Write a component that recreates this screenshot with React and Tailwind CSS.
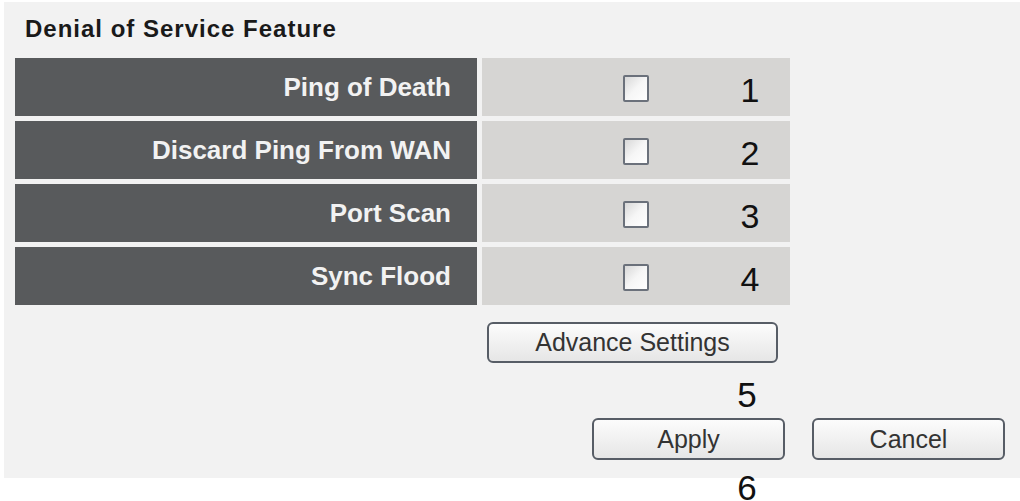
import React from 'react';

const features = [
  { label: 'Ping of Death', num: '1' },
  { label: 'Discard Ping From WAN', num: '2' },
  { label: 'Port Scan', num: '3' },
  { label: 'Sync Flood', num: '4' },
];

const Checkbox = () => (
  <div className="w-[26px] h-[27px] shrink-0 rounded-[2px] border-2 border-[#6b717b] bg-linear-to-br from-[#d8d8d8] via-[#f6f6f6] to-white" />
);

const Button = ({ children, className = '' }) => (
  <button
    className={`rounded-[6px] border-2 border-[#575d66] bg-linear-to-b from-[#fcfcfc] to-[#e6e6e6] text-[25px] leading-none text-[#333] ${className}`}
  >
    {children}
  </button>
);

const App = () => {
  return (
    <div
      className="w-[1020px] h-[501px] overflow-hidden bg-white pt-[2px] pl-[4px]"
      style={{ fontFamily: '"Liberation Sans", Arial, sans-serif' }}
    >
      <div className="h-[476px] bg-[#f2f2f2]">
        {/* Title */}
        <div className="pt-[14px] pl-[21px]">
          <h1 className="text-[24px] leading-[26px] font-bold tracking-[1px] text-[#1a1a1a]">
            Denial of Service Feature
          </h1>
        </div>

        {/* Feature table */}
        <div className="mt-[16px] ml-[11px] w-[775px] flex flex-col gap-[5px]">
          {features.map((f) => (
            <div key={f.num} className="flex h-[58px] gap-[5px]">
              <div className="w-[462px] bg-[#585a5c] flex items-center justify-end pr-[26px]">
                <span className="text-[26px] font-bold text-[#f2f2f2]">{f.label}</span>
              </div>
              <div className="flex-1 bg-[#d6d5d3] flex items-center">
                <div className="ml-[141px] mt-[3px]">
                  <Checkbox />
                </div>
                <span className="ml-[81px] w-[40px] text-center text-[34px] leading-[34px] mt-[6px] text-[#111]">
                  {f.num}
                </span>
              </div>
            </div>
          ))}
        </div>

        {/* Advance settings */}
        <div className="mt-[17px] pl-[483px]">
          <Button className="w-[291px] h-[41px]">Advance Settings</Button>
        </div>
        <div className="mt-[14px] pl-[723px]">
          <div className="w-[40px] text-center text-[35px] leading-[35px] text-[#111]">5</div>
        </div>

        {/* Apply / Cancel */}
        <div className="mt-[6px] pl-[588px] flex gap-[27px]">
          <Button className="w-[193px] h-[42px]">Apply</Button>
          <Button className="w-[193px] h-[42px]">Cancel</Button>
        </div>
        <div className="mt-[10px] pl-[723px]">
          <div className="w-[40px] text-center text-[35px] leading-[35px] text-[#111]">6</div>
        </div>
      </div>
    </div>
  );
};

export default App;
